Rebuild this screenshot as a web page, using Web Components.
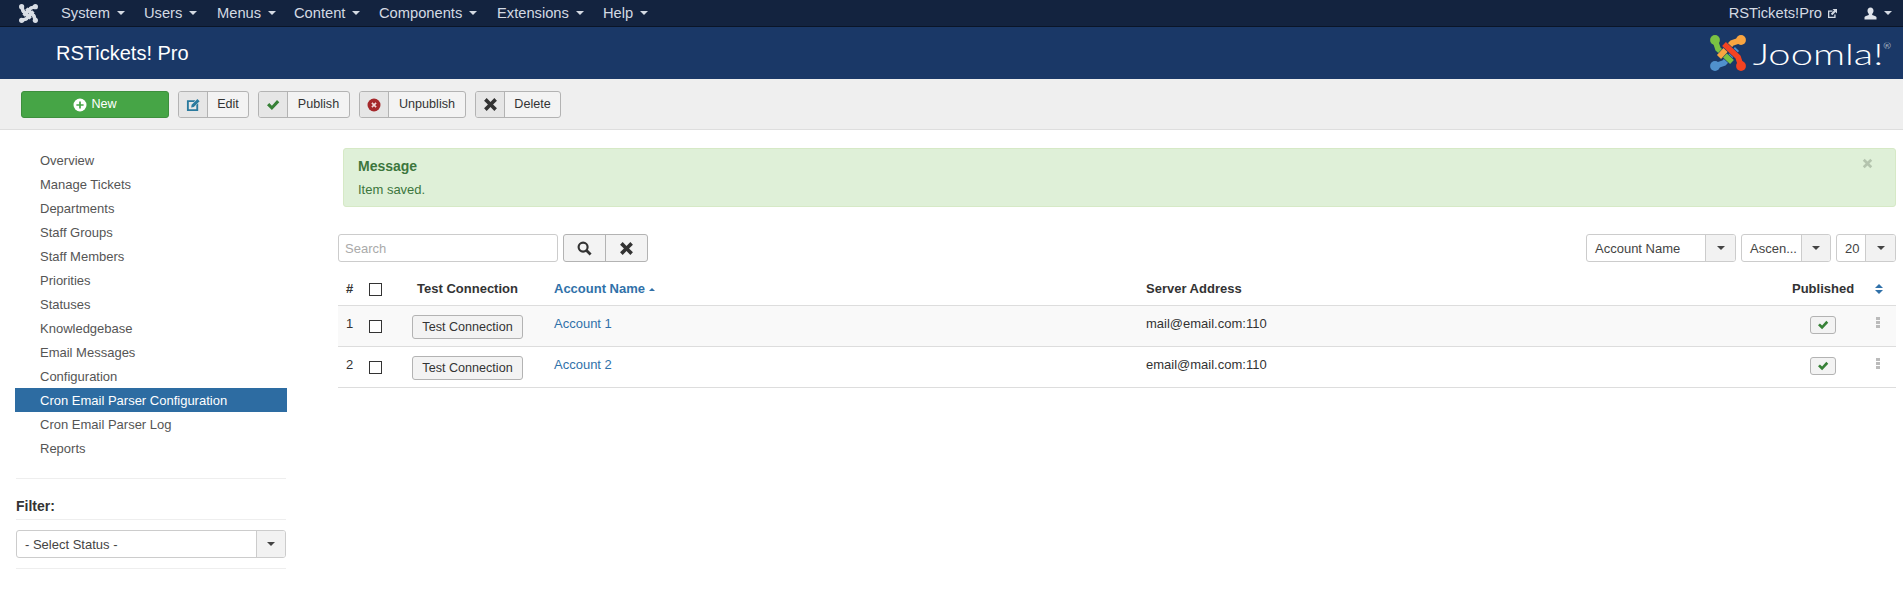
<!DOCTYPE html>
<html>
<head>
<meta charset="utf-8">
<title>RSTickets! Pro</title>
<style>
  html, body { margin: 0; background: #fff; }
  body { font: 13px/18px "Liberation Sans", Arial, sans-serif; color: #333; overflow: hidden; }
</style>
<script>
  const FONT = `"Liberation Sans", Arial, sans-serif`;

  function link(color, gap, angle) {
    const d = "M5 5 L8 14 L22 27";
    return `<g transform="rotate(${angle} 18 18)">
      <path d="${d}" fill="none" stroke="${gap}" stroke-width="6.6"/>
      <path d="${d}" fill="none" stroke="${color}" stroke-width="5.6" stroke-linejoin="round"/>
      <circle cx="5" cy="5" r="4.9" fill="${color}"/></g>`;
  }
  // colours: green, orange, red, blue. Drawn blue first so each crossing has one link on top
  function joomlaMark(size, colors, gap) {
    return `<svg width="${size}" height="${size}" viewBox="0 0 36 36" style="display:block">
      ${link(colors[3], gap, 270)}${link(colors[0], gap, 0)}${link(colors[1], gap, 90)}${link(colors[2], gap, 180)}</svg>`;
  }

  const ICONS = {
    plus: `<svg width="14" height="14" viewBox="0 0 14 14"><circle cx="7" cy="7" r="6.5" fill="#fff"/><path d="M7 3.4v7.2M3.4 7h7.2" stroke="#46a546" stroke-width="1.7"/></svg>`,
    edit: `<svg width="15" height="15" viewBox="0 0 16 16"><path d="M1 3.5h9L8.300 5.300H3v7.700h8V8.600l2-2V15H1z" fill="#2a7a9e"/><path d="M6 8.300l6.200-6.200 2.300 2.300-6.200 6.200-2.800.5z" fill="#2a7a9e"/></svg>`,
    check: `<svg width="14" height="12" viewBox="0 0 14 12"><path d="M1 6.300l2.300-2.200 2.600 2.600L11 1l2.300 2.200-7.400 7.900z" fill="#378137"/></svg>`,
    xcircle: `<svg width="14" height="14" viewBox="0 0 14 14"><circle cx="7" cy="7" r="6.500" fill="#a5282b"/><path d="M4.900 4.900l4.200 4.200M9.100 4.900l-4.200 4.200" stroke="#f0d8d8" stroke-width="1.600"/></svg>`,
    x: `<svg width="15" height="15" viewBox="0 0 14 14"><path d="M1 3.400L3.400 1 7 4.600 10.600 1 13 3.400 9.400 7l3.600 3.600-2.400 2.400L7 9.400 3.400 13 1 10.600 4.600 7z" fill="#333"/></svg>`,
    search: `<svg width="15" height="15" viewBox="0 0 14 14"><circle cx="5.700" cy="5.700" r="4.200" fill="none" stroke="#333" stroke-width="2"/><path d="M8.700 8.700l4 4" stroke="#333" stroke-width="2.600"/></svg>`,
    out: `<svg width="11" height="11" viewBox="0 0 11 11"><path d="M1 2.500h4.500v1.300H2.300v5h5V6.500h1.300V10.100H1z" fill="#d4dae3"/><path d="M5.500 1h4.500v4.500L8.500 4 5.300 7.200 3.800 5.700 7 2.500z" fill="#d4dae3"/></svg>`,
    user: `<svg width="13" height="13" viewBox="0 0 13 13"><path d="M6.500 0.500c1.900 0 3 1.300 3 3.300 0 1.300-.6 2.500-1.300 3.100v1.100c1.900.6 4 1.200 4.300 2.200V12.500H.5v-2.300c.3-1 2.400-1.600 4.300-2.200V6.900C4.100 6.300 3.500 5.100 3.500 3.800c0-2 1.100-3.300 3-3.300z" fill="#dfe3ea"/></svg>`,
  };

  // attributes are not there yet in the constructor when the parser builds the element
  function define(name, css, html) {
    class El extends HTMLElement {
      constructor() {
        super();
        this.attachShadow({ mode: "open" });
      }
      connectedCallback() {
        if (this.shadowRoot.firstChild) return;
        const body = typeof html === "function" ? html(this) : html;
        this.shadowRoot.innerHTML = `<style>${css}</style>${body}`;
      }
    }
    customElements.define(name, El);
  }

  define("jm-navbar", `
    :host { display: flex; align-items: center; height: 26px; background: #13233f; border-bottom: 1px solid #0a1528; color: #d4dae3; font: 14.700px/26px ${FONT}; }
    .mark { margin-left: 19px; width: 19px; height: 19px; }
    nav { display: flex; margin-left: 23px; }
    nav span { display: flex; align-items: center; }
    nav i, .user i { display: block; margin-left: 7px; border: 4px solid transparent; border-top-color: #d4dae3; border-bottom: 0; }
    .right { margin-left: auto; display: flex; align-items: center; }
    .out { margin-left: 5px; display: flex; }
    .user { margin-left: 26px; margin-right: 5px; display: flex; align-items: center; width: 34px; }
  `, () => {
    const items = [["System", 83], ["Users", 73], ["Menus", 77], ["Content", 85], ["Components", 118], ["Extensions", 106], ["Help", 60]];
    return `<div class="mark">${joomlaMark(19, ["#d8dde5", "#d8dde5", "#d8dde5", "#d8dde5"], "#d8dde5")}</div>
      <nav>${items.map(([t, w]) => `<span style="width:${w}px">${t}<i></i></span>`).join("")}</nav>
      <div class="right"><span>RSTickets!Pro</span><span class="out">${ICONS.out}</span>
      <span class="user">${ICONS.user}<i></i></span></div>`;
  });

  define("jm-header", `
    :host { display: flex; align-items: center; height: 52px; background: #1a3867; color: #fff; }
    h1 { margin: 0 0 0 56px; font: 400 20px/24px ${FONT}; }
    .logo { margin-left: auto; margin-right: 12px; display: flex; align-items: center; }
    .box { width: 138px; margin-left: 7px; display: flex; justify-content: flex-end; }
    .word { font: 300 30px/36px Lato, "Open Sans", sans-serif; white-space: nowrap; transform: scaleX(1.33); transform-origin: right center; }
    sup { font-size: 7px; line-height: 0; vertical-align: 16px; }
  `, `<h1>RSTickets! Pro</h1>
    <div class="logo">${joomlaMark(36, ["#7ac143", "#f9a541", "#f44321", "#5091cd"], "#1a3867")}<div class="box"><span class="word">Joomla!<sup>®</sup></span></div></div>`);

  define("jm-toolbar", `
    :host { display: flex; align-items: center; gap: 9px; height: 51px; box-sizing: border-box; padding: 1px 0 0 21px; background: #efefef; border-bottom: 1px solid #dedede; }
  `, `<slot></slot>`);

  define("jm-btn", `
    :host { display: inline-flex; height: 27px; box-sizing: border-box; border: 1px solid #b3b3b3; border-radius: 3px; background: #f3f3f3; font: 12.600px/25px ${FONT}; color: #333; overflow: hidden; }
    .ico { flex: none; width: 28px; display: flex; align-items: center; justify-content: center; background: #e6e6e6; border-right: 1px solid #b3b3b3; }
    .txt { flex: 1; text-align: center; }
    :host([primary]) { justify-content: center; align-items: center; gap: 4px; background: #46a546; border-color: #3d8f3d; color: #fff; }
    :host([primary]) .ico { width: auto; background: none; border: 0; }
    :host([primary]) .txt { flex: none; }
  `, el => {
    el.style.width = el.getAttribute("width") + "px";
    return `<span class="ico">${ICONS[el.getAttribute("icon")]}</span><span class="txt"><slot></slot></span>`;
  });

  define("jm-sidebar", `
    :host { display: block; width: 272px; flex: none; margin-left: 15px; padding-top: 18px; color: #555; }
    a { display: block; height: 24px; line-height: 26px; padding-left: 25px; }
    a.on { background: #2d6ca2; color: #fff; }
    hr { border: 0; border-top: 1px solid #eee; margin: 0 1px; }
    .top { margin-top: 18px; }
    h4 { margin: 17px 1px 0; font: 700 14px/20px ${FONT}; color: #333; padding-bottom: 3px; border-bottom: 1px solid #eee; }
    jm-select { margin: 10px 1px; display: flex; }
  `, () => {
    const items = ["Overview", "Manage Tickets", "Departments", "Staff Groups", "Staff Members", "Priorities", "Statuses", "Knowledgebase", "Email Messages", "Configuration", "Cron Email Parser Configuration", "Cron Email Parser Log", "Reports"];
    return items.map(t => `<a class="${t === "Cron Email Parser Configuration" ? "on" : ""}">${t}</a>`).join("") +
      `<hr class="top"><h4>Filter:</h4><jm-select width="270" arrow="28">- Select Status -</jm-select><hr>`;
  });

  define("jm-select", `
    :host { display: inline-flex; height: 28px; box-sizing: border-box; border: 1px solid #ccc; border-radius: 3px; background: #fff; color: #444; font: 13px/27px ${FONT}; overflow: hidden; }
    .v { flex: 1; padding-left: 8px; white-space: nowrap; overflow: hidden; }
    .a { flex: none; display: flex; align-items: center; justify-content: center; background: #f2f2f2; border-left: 1px solid #ccc; }
    .a i { border: 4px solid transparent; border-top-color: #444; border-bottom: 0; }
  `, el => {
    el.style.width = el.getAttribute("width") + "px";
    return `<span class="v"><slot></slot></span><span class="a" style="width:${el.getAttribute("arrow")}px"><i></i></span>`;
  });

  define("jm-alert", `
    :host { display: block; position: relative; margin-left: 5px; height: 59px; box-sizing: border-box; padding: 8px 14px; background: #dff0d8; border: 1px solid #d6e9c6; border-radius: 3px; color: #3c763d; }
    b { display: block; font: 700 14px/18px ${FONT}; margin-bottom: 6px; }
    span { display: block; line-height: 18px; }
    .close { position: absolute; right: 22px; width: 11px; height: 11px; top: 9px; }
  `, `<b>Message</b><span>Item saved.</span>
    <svg class="close" viewBox="0 0 14 14"><path d="M1 3.400L3.400 1 7 4.600 10.600 1 13 3.400 9.400 7l3.600 3.600-2.400 2.400L7 9.400 3.400 13 1 10.600 4.600 7z" fill="#b4c4ae"/></svg>`);

  define("jm-filterbar", `
    :host { display: flex; margin-top: 27px; height: 28px; }
    .search { width: 220px; box-sizing: border-box; border: 1px solid #ccc; border-radius: 3px; color: #aaa; font: 13px/27px ${FONT}; padding-left: 6px; }
    .btns { display: flex; margin-left: 5px; border: 1px solid #b3b3b3; border-radius: 3px; background: #f3f3f3; box-sizing: border-box; width: 85px; }
    .btns span { flex: 1; display: flex; align-items: center; justify-content: center; }
    .btns span + span { border-left: 1px solid #b3b3b3; }
    .right { margin-left: auto; display: flex; gap: 5px; }
  `, `<div class="search">Search</div><div class="btns"><span>${ICONS.search}</span><span>${ICONS.x}</span></div>
    <div class="right"><jm-select width="150" arrow="29">Account Name</jm-select><jm-select width="90" arrow="28">Ascen...</jm-select><jm-select width="60" arrow="29">20</jm-select></div>`);

  const COLS = "grid-template-columns: 31px 43px 111px 31px 592px 646px 63px 1fr;";

  define("jm-table-head", `
    :host { display: grid; ${COLS} height: 44px; box-sizing: border-box; border-bottom: 1px solid #ddd; align-items: center; font-weight: 700; padding-top: 11px; }
    .n { padding-left: 8px; }
    .c { width: 13px; height: 13px; box-sizing: border-box; border: 1px solid #333; background: #fff; margin-top: 0; }
    .t { text-align: center; white-space: nowrap; }
    a { color: #3071a9; display: flex; align-items: center; }
    a i { margin-left: 4px; border: 3.500px solid transparent; border-bottom-color: #3071a9; border-top: 0; }
    .s { display: flex; flex-direction: column; gap: 2px; margin-left: 20px; width: 8px; }
    .s i { display: block; width: 0; height: 0; border: 4px solid transparent; }
    .s i:first-child { border-bottom-color: #3071a9; border-top: 0; }
    .s i:last-child { border-top-color: #3071a9; border-bottom: 0; }
  `, `<span class="n">#</span><span class="c"></span><span class="t">Test Connection</span><span></span>
    <a>Account Name<i></i></a><span>Server Address</span><span>Published</span><span class="s"><i></i><i></i></span>`);

  define("jm-table-row", `
    :host { display: grid; ${COLS} height: 41px; box-sizing: border-box; border-bottom: 1px solid #ddd; align-items: start; color: #333; }
    :host([odd]) { background: #f9f9f9; }
    .n { padding: 9px 0 0 8px; }
    .c { width: 13px; height: 13px; box-sizing: border-box; border: 1px solid #333; background: #fff; margin-top: 14px; }
    .b { box-sizing: border-box; height: 24px; margin-top: 9px; border: 1px solid #b3b3b3; border-radius: 3px; background: #f3f3f3; text-align: center; font-size: 12.600px; line-height: 22px; white-space: nowrap; }
    a { color: #3071a9; padding-top: 9px; }
    .srv { padding-top: 9px; }
    .p { margin: 10px 0 0 18px; width: 26px; height: 18px; box-sizing: border-box; border: 1px solid #b3b3b3; border-radius: 3px; background: #f3f3f3; display: flex; align-items: center; justify-content: center; }
    .d { margin: 11px 0 0 21px; width: 4px; height: 11px; background: repeating-linear-gradient(#bbb 0 3px, #fff0 3px 4px); }
  `, el => `<span class="n">${el.getAttribute("n")}</span><span class="c"></span><span class="b">Test Connection</span><span></span>
    <a>${el.getAttribute("name")}</a><span class="srv">${el.getAttribute("server")}</span><span class="p">${ICONS.check.replace('width="14" height="12"', 'width="12" height="10"')}</span><span class="d"></span>`);

  define("jm-main", `
    :host { display: block; flex: 1; margin-left: 51px; margin-right: 7px; padding-top: 18px; }
  `, `<slot></slot>`);

  define("jm-layout", `:host { display: flex; }`, `<slot></slot>`);
</script>
</head>
<body>
  <jm-navbar></jm-navbar>
  <jm-header></jm-header>
  <jm-toolbar>
    <jm-btn primary icon="plus" width="148">New</jm-btn>
    <jm-btn icon="edit" width="71">Edit</jm-btn>
    <jm-btn icon="check" width="92">Publish</jm-btn>
    <jm-btn icon="xcircle" width="107">Unpublish</jm-btn>
    <jm-btn icon="x" width="86">Delete</jm-btn>
  </jm-toolbar>
  <jm-layout>
    <jm-sidebar></jm-sidebar>
    <jm-main>
      <jm-alert></jm-alert>
      <jm-filterbar></jm-filterbar>
      <jm-table-head></jm-table-head>
      <jm-table-row odd n="1" name="Account 1" server="mail@email.com:110"></jm-table-row>
      <jm-table-row n="2" name="Account 2" server="email@mail.com:110"></jm-table-row>
    </jm-main>
  </jm-layout>
</body>
</html>
